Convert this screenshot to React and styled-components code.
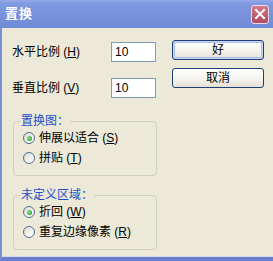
import React from 'react';
import styled, { createGlobalStyle } from 'styled-components';

const GlobalStyle = createGlobalStyle`
  html, body {
    margin: 0;
    padding: 0;
    background: #ece9d8;
  }
  body {
    font-family: "Liberation Sans", "Noto Sans CJK SC", sans-serif;
    font-size: 12px;
    color: #000;
  }
`;

const Window = styled.div`
  width: 273px;
  height: 261px;
  display: flex;
  flex-direction: column;
  overflow: hidden;
`;

const TitleBar = styled.div`
  height: 28px;
  flex: none;
  display: flex;
  align-items: center;
  justify-content: space-between;
  padding: 0 4px 0 5px;
  box-sizing: border-box;
  background: linear-gradient(
    #94abea 0%,
    #8099e0 12%,
    #7892db 55%,
    #6f8ad6 100%
  );
`;

const Title = styled.span`
  color: #fff;
  font-size: 13px;
  font-weight: bold;
  line-height: 14px;
  letter-spacing: 1px;
  margin-top: -1px;
`;

const CloseButton = styled.div`
  width: 18px;
  height: 19px;
  box-sizing: border-box;
  border: 1px solid #eadbe4;
  border-radius: 3px;
  background: linear-gradient(#d47a88, #bf5b6d 60%, #b04e62);
  display: flex;
  align-items: center;
  justify-content: center;
`;

const Frame = styled.div`
  flex: 1;
  display: flex;
  flex-direction: column;
  border-left: 2px solid #7a8fd6;
  border-bottom: 4px solid #6c7ecf;
  background: #ece9d8;
`;

const Body = styled.div`
  flex: 1;
  display: flex;
  padding: 0 9px 0 10px;
  border-bottom: 1px solid #d6d8ef;
`;

const LeftColumn = styled.div`
  width: 145px;
  display: flex;
  flex-direction: column;
  padding-top: 14px;
`;

const RightColumn = styled.div`
  margin-left: auto;
  width: 92px;
  display: flex;
  flex-direction: column;
  gap: 8px;
  padding-top: 12px;
`;

const FieldRow = styled.div`
  display: flex;
  align-items: center;
  height: 20px;
  margin-bottom: ${p => p.$gap}px;
`;

const Label = styled.label`
  width: 99px;
  line-height: 14px;
`;

const Input = styled.div`
  width: 45px;
  height: 20px;
  box-sizing: border-box;
  border: 1px solid #7f9db9;
  background: #fff;
  padding: 0 3px;
  display: flex;
  align-items: center;
  line-height: 14px;
`;

const Group = styled.fieldset`
  margin: 0 0 ${p => p.$gap}px 1px;
  padding: 0 0 9px 9px;
  border: 1px solid #d0d0bf;
  border-radius: 4px;
  min-inline-size: 0;
  width: 144px;
  box-sizing: border-box;
  display: flex;
  flex-direction: column;
  gap: 4px;
`;

const Legend = styled.legend`
  color: #1f4fc8;
  padding: 0 1px;
  margin-left: -3px;
  line-height: 14px;
`;

const RadioRow = styled.div`
  display: flex;
  align-items: center;
  gap: 4px;
  height: 16px;
  line-height: 14px;
  margin-top: ${p => p.$first ? '2px' : '0'};
`;

const RadioCircle = styled.span`
  width: 12px;
  height: 12px;
  box-sizing: border-box;
  border-radius: 50%;
  border: 1px solid #4f6f93;
  background: linear-gradient(135deg, #dcd9cf, #f4f3ee 60%, #fff);
  display: flex;
  align-items: center;
  justify-content: center;
  flex: none;

  &::after {
    content: '';
    display: ${p => (p.$checked ? 'block' : 'none')};
    width: 5px;
    height: 5px;
    border-radius: 50%;
    background: radial-gradient(circle at 40% 40%, #8fe08f, #38a838 70%);
  }
`;

const Button = styled.div`
  height: 20px;
  box-sizing: border-box;
  border: 1px solid #1f3f72;
  border-radius: 3px;
  background: linear-gradient(#ffffff, #f4f3ee 55%, #e3e0d5 100%);
  box-shadow: ${p =>
    p.$default ? 'inset 0 0 0 1px #c6d6f5, inset 0 0 0 2px #a9c0ec' : 'none'};
  display: flex;
  align-items: center;
  justify-content: center;
  line-height: 14px;
`;

const Key = styled.span`
  text-decoration: underline;
`;

const Close = () => (
  <svg width="12" height="12" viewBox="0 0 12 12">
    <path d="M2 2 L10 10 M10 2 L2 10" stroke="#fff" strokeWidth="2" strokeLinecap="square" />
  </svg>
);

const Radio = ({ checked, first, children }) => (
  <RadioRow $first={first}>
    <RadioCircle $checked={checked} />
    <span>{children}</span>
  </RadioRow>
);

const App = () => (
  <Window>
    <GlobalStyle />
    <TitleBar>
      <Title>置换</Title>
      <CloseButton>
        <Close />
      </CloseButton>
    </TitleBar>
    <Frame>
      <Body>
        <LeftColumn>
          <FieldRow $gap={16}>
            <Label>水平比例 (<Key>H</Key>)</Label>
            <Input>10</Input>
          </FieldRow>
          <FieldRow $gap={16}>
            <Label>垂直比例 (<Key>V</Key>)</Label>
            <Input>10</Input>
          </FieldRow>
          <Group $gap={12}>
            <Legend>置换图：</Legend>
            <Radio checked first>伸展以适合 (<Key>S</Key>)</Radio>
            <Radio>拼贴 (<Key>T</Key>)</Radio>
          </Group>
          <Group $gap={0}>
            <Legend>未定义区域：</Legend>
            <Radio checked first>折回 (<Key>W</Key>)</Radio>
            <Radio>重复边缘像素 (<Key>R</Key>)</Radio>
          </Group>
        </LeftColumn>
        <RightColumn>
          <Button $default>好</Button>
          <Button>取消</Button>
        </RightColumn>
      </Body>
    </Frame>
  </Window>
);

export default App;
